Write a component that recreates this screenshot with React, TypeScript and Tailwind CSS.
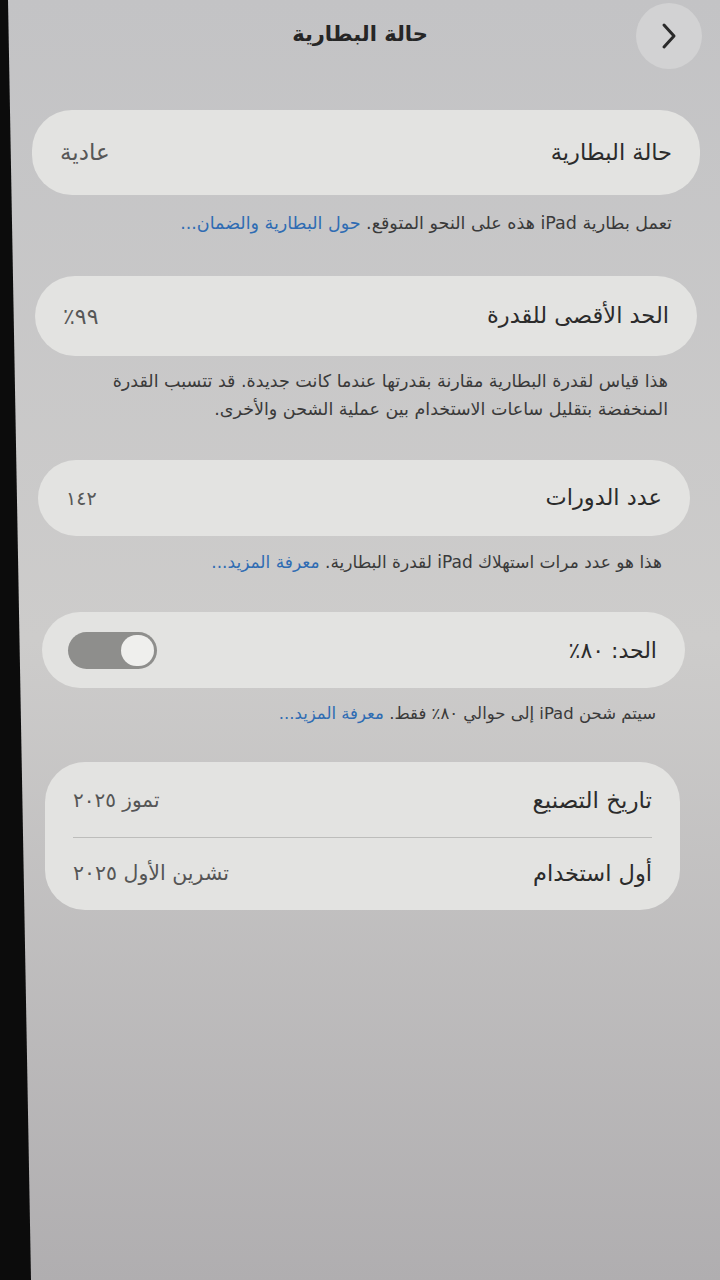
import React from "react";

const font = { fontFamily: '"DejaVu Sans", sans-serif' };

function Card({ className, children }: { className: string; children: React.ReactNode }) {
  return <div className={"rounded-[40px] bg-[#e3e3e1] " + className}>{children}</div>;
}

export default function App() {
  return (
    <div
      dir="rtl"
      style={font}
      className="relative w-[720px] h-[1280px] overflow-hidden bg-gradient-to-b from-[#c3c3c5] via-[#cdcccb] to-[#b0aeb0] text-[#2b2b2b]"
    >
      {/* header */}
      <div className="grid grid-cols-[90px_1fr_90px] items-center h-[70px]">
        <div className="flex justify-start pr-[18px] pt-[2px]">
          <div className="w-[66px] h-[66px] rounded-full bg-[#d2d2d3] flex items-center justify-center">
            <svg width="22" height="30" viewBox="0 0 22 30" fill="none">
              <path d="M6 4 L16 15 L6 26" stroke="#2a2a2a" strokeWidth="3" strokeLinecap="round" strokeLinejoin="round" />
            </svg>
          </div>
        </div>
        <div className="text-center text-[21px] font-bold text-[#262626]">حالة البطارية</div>
        <div />
      </div>

      {/* card 1 */}
      <Card className="mt-[40px] mr-[20px] ml-[32px] h-[85px] flex items-center justify-between px-[28px]">
        <span className="text-[22.5px]">حالة البطارية</span>
        <span className="text-[23px] text-[#575757]">عادية</span>
      </Card>
      <div className="mt-[16px] mr-[48px] ml-[30px] text-[17.5px] text-[#3a3a3a] leading-[24px]">
        تعمل بطارية iPad هذه على النحو المتوقع. <span className="text-[#2f6cb3]">حول البطارية والضمان...</span>
      </div>

      {/* card 2 */}
      <Card className="mt-[41px] mr-[23px] ml-[35px] h-[80px] flex items-center justify-between px-[28px]">
        <span className="text-[22.5px]">الحد الأقصى للقدرة</span>
        <span className="text-[22px] text-[#575757]">٩٩٪</span>
      </Card>
      <div className="mt-[11px] mr-[52px] ml-[30px] text-[17.5px] text-[#3a3a3a] leading-[28px]">
        هذا قياس لقدرة البطارية مقارنة بقدرتها عندما كانت جديدة. قد تتسبب القدرة
        <br />
        المنخفضة بتقليل ساعات الاستخدام بين عملية الشحن والأخرى.
      </div>

      {/* card 3 */}
      <Card className="mt-[37px] mr-[30px] ml-[38px] h-[76px] flex items-center justify-between px-[28px]">
        <span className="text-[22.5px]">عدد الدورات</span>
        <span className="text-[19px] text-[#575757]">١٤٢</span>
      </Card>
      <div className="mt-[14px] mr-[58px] ml-[30px] text-[17px] text-[#3a3a3a] leading-[24px]">
        هذا هو عدد مرات استهلاك iPad لقدرة البطارية. <span className="text-[#2f6cb3]">معرفة المزيد...</span>
      </div>

      {/* card 4 */}
      <Card className="mt-[38px] mr-[35px] ml-[42px] h-[76px] flex items-center justify-between pr-[28px] pl-[26px]">
        <span className="text-[22px]">الحد: ٨٠٪</span>
        <div className="w-[89px] h-[37px] rounded-full bg-[#8e8e8c] flex items-center justify-start px-[3px]">
          <div className="w-[33px] h-[31px] rounded-full bg-[#efefed]" />
        </div>
      </Card>
      <div className="mt-[14px] mr-[64px] ml-[30px] text-[16.5px] text-[#3a3a3a] leading-[24px]">
        سيتم شحن iPad إلى حوالي ٨٠٪ فقط. <span className="text-[#2f6cb3]">معرفة المزيد...</span>
      </div>

      {/* card 5 */}
      <Card className="mt-[36px] mr-[40px] ml-[45px] h-[148px] flex flex-col px-[28px]">
        <div className="flex-1 flex items-center justify-between pt-[2px]">
          <span className="text-[23px]">تاريخ التصنيع</span>
          <span className="text-[20px] text-[#555555]">تموز ٢٠٢٥</span>
        </div>
        <div className="h-px bg-[#bdbdbb]" />
        <div className="flex-1 flex items-center justify-between">
          <span className="text-[22.5px]">أول استخدام</span>
          <span className="text-[20.5px] text-[#555555]">تشرين الأول ٢٠٢٥</span>
        </div>
      </Card>

      {/* photo edge */}
      <svg className="absolute left-0 top-0 pointer-events-none" width="40" height="1280" viewBox="0 0 40 1280">
        <polygon points="0,0 8,0 31,1280 0,1280" fill="#0c0c0c" />
      </svg>
    </div>
  );
}
